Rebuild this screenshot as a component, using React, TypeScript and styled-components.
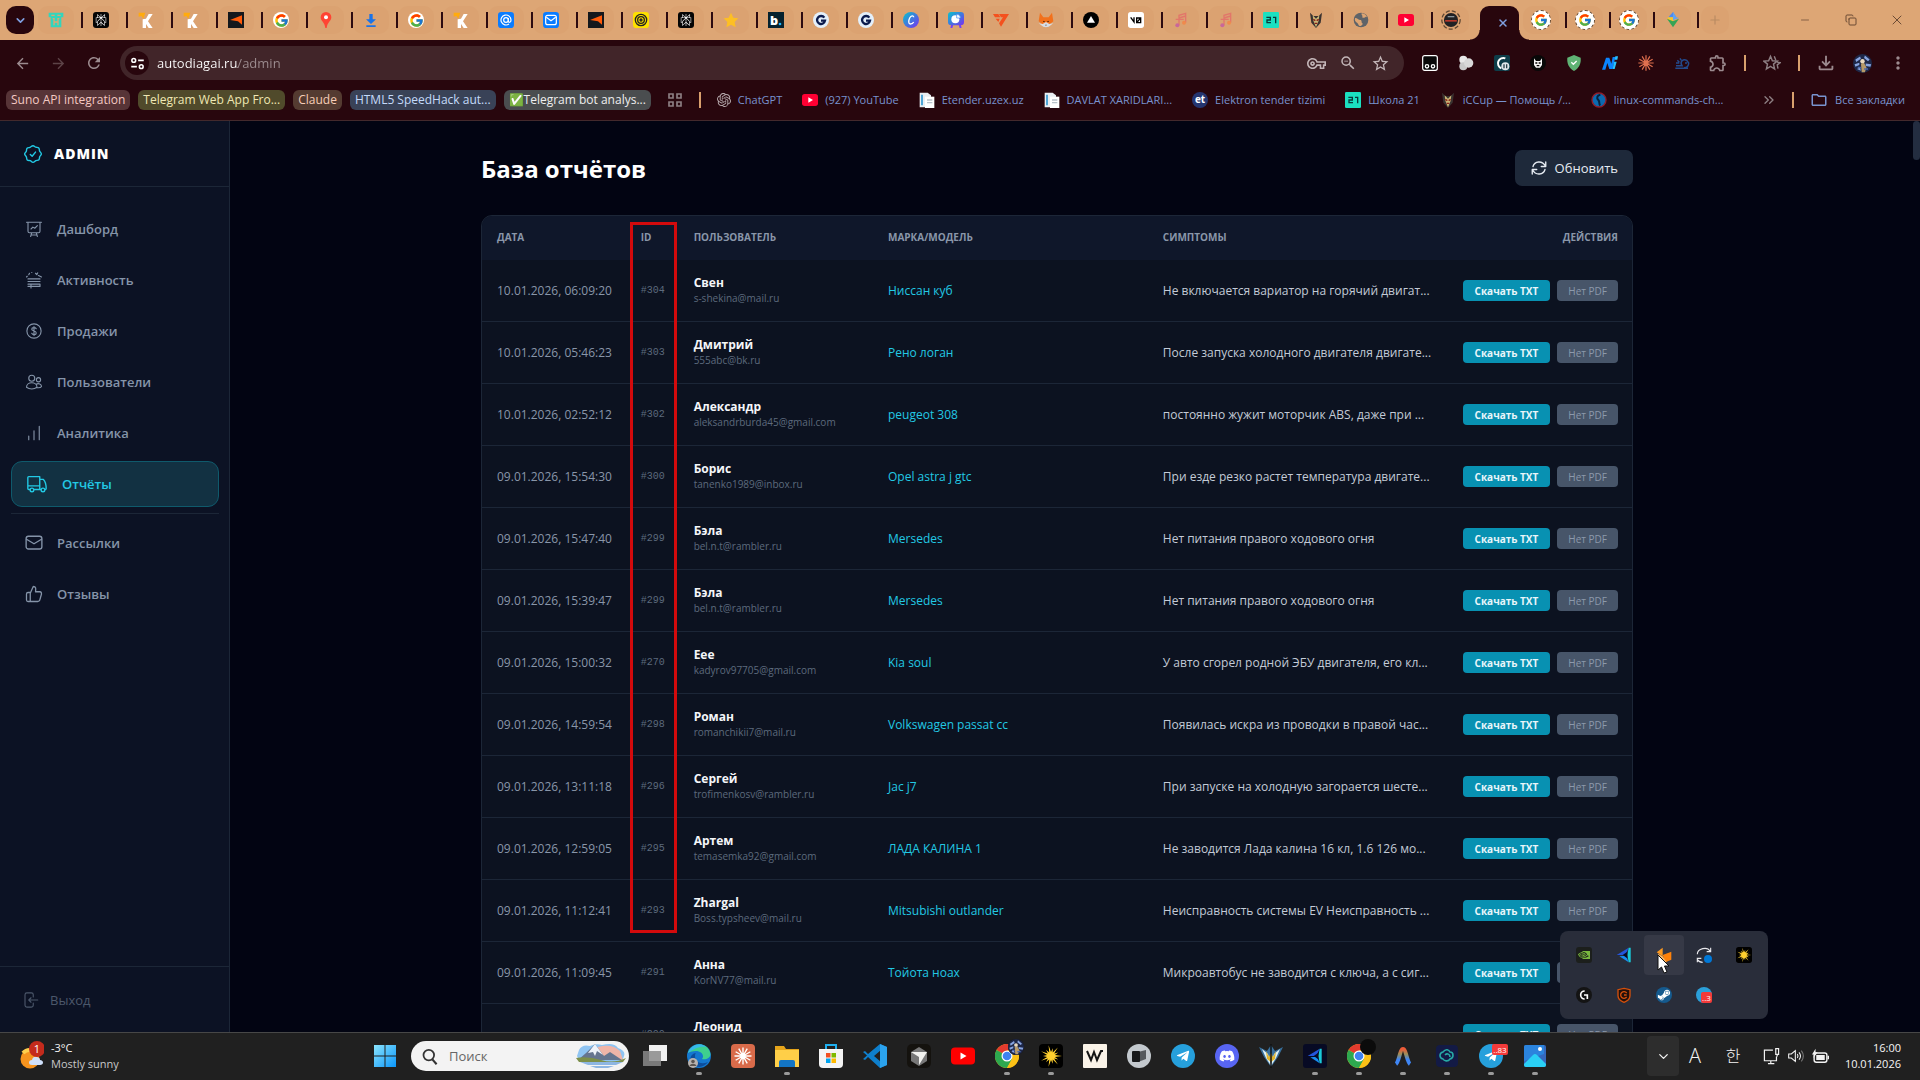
import React from 'react';
import styled, { createGlobalStyle, css } from 'styled-components';
import { FcGoogle } from 'react-icons/fc';
import { FaTelegramPlane, FaDiscord, FaSteamSymbol } from 'react-icons/fa';
import { SiOpenai, SiNvidia, SiPerplexity } from 'react-icons/si';
import {
  MdArrowBack, MdArrowForward, MdRefresh, MdOutlineVpnKey, MdZoomOut, MdStarBorder,
  MdOutlineExtension, MdOutlineFileDownload, MdMoreVert, MdOutlineFolder,
} from 'react-icons/md';
import { ChevronDown, ChevronsRight, X, Plus, Minus, Copy } from 'lucide-react';

const ui = '"Open Sans", "Noto Sans", sans-serif';

const Global = createGlobalStyle`
  * { box-sizing: border-box; }
  body { margin: 0; background: #020412; font-family: ${ui}; overflow: hidden; }
  button, input { font-family: inherit; margin: 0; padding: 0; border: 0; background: none; color: inherit; }
  a { color: inherit; text-decoration: none; }
  svg { display: block; flex: none; }
`;

/* ---------- drawings ---------- */

const rays = (n: number, cx: number, cy: number, r1: number, r2: number) =>
  Array.from({ length: n }, (_, i) => {
    const a = (i / n) * Math.PI * 2;
    return `M${cx + r1 * Math.cos(a)} ${cy + r1 * Math.sin(a)}L${cx + r2 * Math.cos(a)} ${cy + r2 * Math.sin(a)}`;
  }).join('');

const spikes = (n: number, r1: number, r2: number) =>
  'M' + Array.from({ length: n * 2 }, (_, i) => {
    const a = (i / n) * Math.PI;
    const r = i % 2 ? r1 : r2 - (i % 4 ? 3 : 0);
    return `${12 + r * Math.cos(a)} ${12 + r * Math.sin(a)}`;
  }).join('L') + 'Z';

const Svg = ({ size = 16, children }: { size?: number; children: React.ReactNode }) => (
  <svg width={size} height={size} viewBox="0 0 24 24" aria-hidden="true">{children}</svg>
);

type Draw = (p: { size?: number }) => React.ReactElement;

const TH: Draw = p => <Svg {...p}><path d="M1 1h22v7h-3v15H4V8H1z" fill="#32d5bd" /><path d="M5 4h5v2H5zm9 0h5v2h-5zM7 9h3v5h4V9h3v2h-1v9h-2v-4h-4v4H8v-9H7z" fill="#dda573" /></Svg>;
const Perplexity: Draw = ({ size = 16 }) => <Tile $s={size} $bg="#050505" $fg="#fff"><SiPerplexity size={size - 4} /></Tile>;
const Kwork: Draw = p => <Svg {...p}><path d="M1 1h10L8 10 5 6 1 7z" fill="#ffab0f" /><path d="M7 11V24h5v-6l4 6h6l-7-10 7-11h-6l-4 7z" fill="#fff" /></Svg>;
const Arrow: Draw = p => <Svg {...p}><path d="M0 0h24v24H0z" fill="#15181c" /><path d="M3 12 21 5v14l-6-5z" fill="#ff5b0a" /></Svg>;
const Pin: Draw = p => <Svg {...p}><path d="M12 0a8 8 0 0 0-8 8c0 6 6 7 7 16h2c1-9 7-10 7-16a8 8 0 0 0-8-8z" fill="#ff4433" /><circle cx="12" cy="8" r="3" fill="#fff" /></Svg>;
const Down: Draw = p => <Svg {...p}><path d="M9.500 3h5v8h5L12 18 4.500 11h5zM5 20h14v2.500H5z" fill="#1a73e8" /></Svg>;
const At: Draw = p => <Svg {...p}><rect width="24" height="24" rx="5" fill="#0a7cff" /><g fill="none" stroke="#fff" strokeWidth="1.800"><circle cx="12" cy="12" r="3.500" /><path d="M15.500 9v4.500c0 3 4 2.500 4-1.500a7.500 7.500 0 1 0-3 6" /></g></Svg>;
const MailBlue: Draw = p => <Svg {...p}><rect width="24" height="24" rx="5" fill="#0a7cff" /><rect x="4" y="5" width="16" height="14" rx="3" fill="none" stroke="#fff" strokeWidth="1.800" /><path d="m5 8 7 5 7-5" fill="none" stroke="#fff" strokeWidth="1.800" /></Svg>;
const Finger: Draw = p => <Svg {...p}><rect width="24" height="24" rx="5" fill="#ffe100" /><g fill="none" stroke="#222" strokeWidth="2"><circle cx="12" cy="12" r="8.500" /><circle cx="12" cy="12" r="5" /><circle cx="12" cy="12" r="1.500" /></g></Svg>;
const StarY: Draw = p => <Svg {...p}><path d="m12 1 3.500 7.500 7.500 1-5.500 5.500 1.500 8-7-4-7 4 1.500-8L1 9.500l7.500-1z" fill="#fdbf24" /></Svg>;
const Bdot: Draw = p => <Svg {...p}><path d="M0 0h24v24H0z" fill="#06222e" /><text x="3" y="19" fontSize="19" fontWeight="800" fontFamily="Open Sans" fill="#fff">b</text><circle cx="18" cy="18" r="2" fill="#1fb6ff" /></Svg>;
const GDark: Draw = p => <Svg {...p}><circle cx="12" cy="12" r="12" fill="#e3effa" /><path d="M17 8.500A6 6 0 1 0 18 13h-6" fill="none" stroke="#0b1b4d" strokeWidth="3.500" /></Svg>;
const Canva: Draw = p => <Svg {...p}><defs><linearGradient id="cv" x1="0" y1="0" x2="1" y2="1"><stop stopColor="#06c4cc" /><stop offset="1" stopColor="#7a2ff0" /></linearGradient></defs><circle cx="12" cy="12" r="12" fill="url(#cv)" /><path d="M16 8c0-3-4-3-6 1s-2 9 1 9 4-1 5-3" fill="none" stroke="#fff" strokeWidth="2" /></Svg>;
const Pie: Draw = p => <Svg {...p}><path d="m7 17-2 7m12-7 2 7" stroke="#7a3cf5" strokeWidth="3" /><rect y="0" width="24" height="20" rx="5" fill="url(#cv)" /><circle cx="11" cy="11" r="6" fill="#fff" /><path d="M13 9V3a7 7 0 0 1 6 6z" fill="#fff" stroke="#3c85ef" /></Svg>;
const Seven: Draw = p => <Svg {...p}><path d="M9 3h15L12 22l-3-5 6-9h-3z" fill="#f4511e" /><path d="M0 3h8l3 5H3zm4 7h6l-2 5z" fill="#f4511e" /></Svg>;
const Fox: Draw = p => <Svg {...p}><path d="m3 1 5 7h8l5-7 2 13-11 9L1 14z" fill="#f2711c" /><path d="m1 17 7 5 4 1 4-1 7-5-6 1-5-3-5 3z" fill="#d8dde4" /><path d="m8 13 3 2H8zm8 0-3 2h3zm-5 6h2l-1 2z" fill="#2a1408" /></Svg>;
const Vercel: Draw = p => <Svg {...p}><circle cx="12" cy="12" r="12" fill="#000" /><path d="m12 6 6 10H6z" fill="#fff" /></Svg>;
const Vzero: Draw = p => <Svg {...p}><rect width="24" height="24" rx="4" fill="#fff" /><path d="m4 8 5 7V8m4 1h6v7h-6zm0 7 6-7" fill="none" stroke="#000" strokeWidth="2" /></Svg>;
const Music: Draw = p => <Svg {...p}><path d="M9 20V5l10-3v14M9 9l10-3M4 11h12" fill="none" stroke="#e2766a" strokeWidth="2" /><circle cx="6.500" cy="20" r="3" fill="#c9679a" /><circle cx="16.500" cy="16" r="3" fill="#ef8a4c" /></Svg>;
const School: Draw = p => <Svg {...p}><rect width="24" height="24" rx="2" fill="#1be0c0" /><path d="M5 8h6v4H6v4h6M15 8h4v9" fill="none" stroke="#08383a" strokeWidth="2" /></Svg>;
const Mask: Draw = p => <Svg {...p}><path d="m3 1 5 5h8l5-5-2 15-7 8-7-8z" fill="#3a3230" /><path d="m7 5 5 5 5-5-1 8-4 10-4-10z" fill="#c9b777" /><path d="m8 11 3 2m5-2-3 2m-3 4h4" stroke="#8a2018" strokeWidth="2" /></Svg>;
const Globe: Draw = p => <Svg {...p}><circle cx="12" cy="12" r="11" fill="#5f6368" /><path d="M3 9c4 0 5 3 8 3s1 4 3 5-2 5-4 4-2-4-4-5-4-3-3-7zM13 2c-1 3 2 3 1 5s4 2 5 0l2 1c-1-4-5-6-8-6z" fill="#dda573" /></Svg>;
const YouTube: Draw = p => <Svg {...p}><rect y="3" width="24" height="18" rx="4" fill="#ff0033" /><path d="m9.500 8 7 4-7 4z" fill="#fff" /></Svg>;
const Ring: Draw = () => <Svg size={20}><circle cx="12" cy="12" r="11" fill="none" stroke="#5d4632" strokeWidth="1.500" strokeDasharray="5 2.500" /><circle cx="12" cy="12" r="8.500" fill="#202124" /><path d="M5 13h14" stroke="#b8372a" strokeWidth="2" /><path d="M8 8h8" stroke="#8f9aa0" strokeWidth="1.500" /></Svg>;
const RingG: Draw = () => <RingWrap><FcGoogle size={14} /></RingWrap>;
const Google: Draw = () => <Disc><FcGoogle size={15} /></Disc>;
const Gem: Draw = p => <Svg {...p}><path d="m12 0 5 8H5z" fill="#4e8cf0" /><path d="m17 8-5-8v12l9-3z" fill="#5fa3f5" /><path d="M5 8 3 11l9 5V8z" fill="#f5c52c" /><path d="M3 10 12 23l9-13-9 4z" fill="#35a455" /></Svg>;

const Robot: Draw = p => <Svg {...p}><rect x="1" y="1" width="22" height="22" rx="3" fill="#080808" stroke="#fff" strokeWidth="1.800" /><g fill="none" stroke="#fff" strokeWidth="2"><circle cx="7.500" cy="17" r="2.500" /><circle cx="16.500" cy="17" r="2.500" /></g></Svg>;
const Blobs: Draw = p => <Svg {...p}><circle cx="8" cy="7" r="6" fill="#e8e8e8" /><circle cx="8" cy="17" r="6" fill="#c9c9c9" /><circle cx="16" cy="12" r="7" fill="#d8d8d8" /></Svg>;
const Gpause: Draw = p => <Svg {...p}><rect width="24" height="24" rx="3" fill="#0d3d49" /><path d="M17 5A8 8 0 1 0 11 20" fill="none" stroke="#fff" strokeWidth="3" /><circle cx="17" cy="17" r="6" fill="#dfe7ea" /><path d="M15 14v6m4-6v6" stroke="#29424a" strokeWidth="2" /></Svg>;
const Wolf: Draw = p => <Svg {...p}><circle cx="12" cy="12" r="12" fill="#080808" /><path d="m6 5 3 4h6l3-4v10l-3 4H9l-3-4z" fill="#f5f5f5" /><path d="M8 12h3m2 0h3m-6 4h4" stroke="#000" strokeWidth="2" /></Svg>;
const Shield: Draw = p => <Svg {...p}><path d="m12 0 10 4c1 9-3 16-10 20C5 20 1 13 2 4z" fill="#5fb374" /><path d="m8 11 3 3 5-5" fill="none" stroke="#fff" strokeWidth="2" /></Svg>;
const Ni: Draw = p => <Svg {...p}><path d="m0 22 6-18h5l3 9 2-10h4l-4 18h-5l-3-9-3 10z" fill="#0a84ff" /><path d="m18 10h4l-3 11h-3zm2-8h4l-1 5h-4z" fill="#27c2ff" /></Svg>;
const Burst: Draw = p => <Svg {...p}><path d={rays(12, 12, 12, 0, 11.500)} stroke="#e0704f" strokeWidth="1.800" /></Svg>;
const Whale: Draw = p => <Svg {...p}><path d="M2 20h19M3 16h9c-4-6 2-11 7-8l3 4c0 5-3 7-7 7M5 8l3 3M3 12h5M9 5l2 3" fill="none" stroke="#234a8d" strokeWidth="2.200" /><circle cx="18" cy="12" r="1.500" fill="#234a8d" /></Svg>;
const StarList: Draw = p => <Svg {...p}><path d="m10 3 2.500 6 6.500.5-5 4 1.500 6.500-5.500-3.500L4.500 20 6 13.500l-5-4 6.500-.5zM15 3l2 5m2 3 4 .5-4 3 1 5" fill="none" stroke="#8d7f83" strokeWidth="1.900" /></Svg>;
const Avatar: Draw = p => <Svg {...p}><circle cx="12" cy="12" r="12" fill="#1e2747" /><path d="M3 7l6-4 1 3-6 4zm12-5 6 5-2 2-5-4zM2 13l6-2v3l-5 2zm14-1 7 1-1 3-6-1zM5 19l4-2 1 4z" fill="#87a4e0" /><path d="m10 12 4-1 3 6-2 6h-4z" fill="#b79a68" /><circle cx="12" cy="9" r="2.800" fill="#e8d8bd" /><path d="M6 17h4M14 19h5" stroke="#4d68ad" strokeWidth="2" /></Svg>;
const Tune: Draw = p => <Svg {...p}><g fill="none" stroke="#fff" strokeWidth="2.500"><circle cx="6" cy="7" r="3" /><path d="M13 7h9M2 17h9" /><circle cx="18" cy="17" r="3" /></g></Svg>;
const AppsGrid: Draw = p => <Svg {...p}><path d="M3 3h6v6H3zm12 0h6v6h-6zM3 15h6v6H3zm12 0h6v6h-6z" fill="none" stroke="#8d7f83" strokeWidth="2.500" /></Svg>;
const Pages: Draw = p => <Svg {...p}><path d="M1 1h12l5 4v18H1z" fill="#e9eef2" /><path d="M9 7h14v17H9z" fill="#fff" /><path d="M3 4h3v16H3z" fill="#4ea5d6" /><path d="M12 12h8m-8 4h8" stroke="#b8c2ca" strokeWidth="2" /></Svg>;
const Et: Draw = p => <Svg {...p}><circle cx="12" cy="12" r="12" fill="#25356f" /><text x="12" y="17" textAnchor="middle" fontSize="15" fontWeight="700" fontFamily="Open Sans" fill="#fff">et</text></Svg>;
const Linux: Draw = p => <Svg {...p}><circle cx="12" cy="12" r="10.500" fill="#0b6ab0" stroke="#8e1e2b" strokeWidth="2" /><path d="M14 4c-5 1-6 5-3 8s0 6 3 8" fill="none" stroke="#03223e" strokeWidth="3" /></Svg>;

/* taskbar */
const WinLogo: Draw = () => <Svg size={24}><defs><linearGradient id="wn" x1="0" y1="0" x2="1" y2="1"><stop stopColor="#8be4fd" /><stop offset="1" stopColor="#0a96fb" /></linearGradient></defs><path d="M1 1h10.500v10.500H1zm11.500 0H23v10.500H12.500zM1 12.500h10.500V23H1zm11.500 0H23V23H12.500z" fill="url(#wn)" /></Svg>;
const TaskView: Draw = p => <Svg {...p}><path d="M6 1h18v16H6z" fill="#f1f1f1" /><path d="M0 7h18v15H0z" fill="#8b8b8b" opacity=".85" /></Svg>;
const Edge: Draw = p => <Svg {...p}><circle cx="12" cy="12" r="12" fill="#1478cf" /><path d="M1 9C4-1 19-3 23 8c2 6-4 8-8 7 3-4-1-8-6-8-4 0-7 1-8 2z" fill="#3ecf8e" /><path d="M1 9C4 0 14-2 19 3 12 2 7 5 1 9z" fill="#35b8e8" /><path d="M8 12c0 6 6 9 13 6-4 6-13 7-17 0-2-4 1-9 5-9-1 1-1 2-1 3z" fill="#0c4d9c" /><circle cx="6" cy="19" r="5" fill="#b8b3af" /><circle cx="6" cy="17.500" r="1.800" fill="#5c5652" /><path d="M2.500 22c1-3 6-3 7 0z" fill="#5c5652" /></Svg>;
const Claude: Draw = p => <Svg {...p}><rect width="24" height="24" rx="4" fill="#d96b4a" /><path d={rays(12, 12, 12, 0, 8.500)} stroke="#fff" strokeWidth="1.400" /></Svg>;
const Explorer: Draw = p => <Svg {...p}><path d="M0 2h9l2 3h13v5H0z" fill="#e6a51b" /><path d="M0 6h24v17H0z" fill="#ffcf48" /><path d="M4 23v-5q0-2 2-2h12q2 0 2 2v5z" fill="#1375c4" /></Svg>;
const Store: Draw = p => <Svg {...p}><path d="M7 6V1h10v5" fill="none" stroke="#1fb0f0" strokeWidth="2" /><path d="M0 5h24v15q0 4-4 4H4q-4 0-4-4z" fill="#f4f4f4" /><path d="M7 9h4.500v4.500H7z" fill="#f25022" /><path d="M12.500 9H17v4.500h-4.500z" fill="#7fba00" /><path d="M7 14.500h4.500V19H7z" fill="#00a4ef" /><path d="M12.500 14.500H17V19h-4.500z" fill="#ffb900" /></Svg>;
const VsCode: Draw = p => <Svg {...p}><path d="m17 0 7 3v18l-7 3L5 13l-3 3-2-1 4-3.500L0 8l2-1 3 3zm1 6-7 6 7 6z" fill="#0e7fcc" fillRule="evenodd" /><path d="m17 0 7 3v18l-7 3z" fill="#2ba3ee" /></Svg>;
const CursorApp: Draw = p => <Svg {...p}><rect width="24" height="24" rx="5" fill="#14120e" /><path d="m12 3 8 5v9l-8 5-8-5V8z" fill="#777" /><path d="M4 8h16l-8 13v-8z" fill="#f1f1ee" /></Svg>;
const YtApp: Draw = p => <Svg {...p}><rect y="3.500" width="24" height="17" rx="4" fill="#f00" /><path d="m9.500 8.500 6 3.500-6 3.500z" fill="#fff" /></Svg>;
const Chrome: Draw = p => <Svg {...p}><circle cx="12" cy="12" r="12" fill="#fbc116" /><path d="M12 12 1.600 6A12 12 0 0 1 22.400 6z" fill="#e33b2e" /><path d="M1.600 6A12 12 0 0 0 12 24l5-9-5-3z" fill="#2da94f" /><path d="M22.400 6H12l5 9-5 9A12 12 0 0 0 22.400 6z" fill="#fbc116" /><circle cx="12" cy="12" r="5.500" fill="#fff" /><circle cx="12" cy="12" r="4.300" fill="#3f83f1" /></Svg>;
const Sun: Draw = p => <Svg {...p}><rect width="24" height="24" rx="4" fill="#000" /><path d={spikes(14, 4, 11)} fill="#ffd02e" /></Svg>;
const Wapp: Draw = p => <Svg {...p}><rect width="24" height="24" rx="1" fill="#faf3e8" /><path d="m4 7 4 9 3-8 3 8 4-9h2" fill="none" stroke="#141414" strokeWidth="2" /></Svg>;
const Phones: Draw = p => <Svg {...p}><circle cx="12" cy="12" r="12" fill="#c3c9ce" /><path d="m11 8 8-2v9l-8 3z" fill="#55595d" /><path d="M5 8q0-1 1-1h6q1 0 1 1v9q0 1-1 1H6q-1 0-1-1z" fill="#17191b" /></Svg>;
const Telegram: Draw = ({ size = 24 }) => <Tile $s={size} $bg="#26a0dc" $fg="#fff" $round><FaTelegramPlane size={Math.round(size * 0.6)} /></Tile>;
const Discord: Draw = ({ size = 24 }) => <Tile $s={size} $bg="#5865f2" $fg="#fff" $round><FaDiscord size={16} /></Tile>;
const Bird: Draw = p => <Svg {...p}><path d="m0 3 8 4 4-6 4 6 8-4-5 10-7 10L5 13z" fill="#376f9c" /><path d="m3 5 6 5 3 10 3-10 6-5-4 9-5 8-5-8z" fill="#dff1f6" /><path d="m7 7 3 6 2-4 2 4 3-6-1 8-4 3-4-3z" fill="#e0b52d" /><path d="M12 0v24" stroke="#111" strokeWidth="1.500" /></Svg>;
const Prism: Draw = p => <Svg {...p}><path d="M1 12 19 1l-5 11z" fill="#2455dd" /><path d="M19 1h3v22h-3l-2-11z" fill="#19c9d8" /><path d="m5 14 14 9-4-10z" fill="#178cf0" /><path d="m10 12 7-5v10z" fill="#070a24" /></Svg>;
const PrismApp: Draw = ({ size = 24 }) => <Tile $s={size} $bg="#070a24" $fg="#fff"><Prism size={16} /></Tile>;
const Arch: Draw = p => <Svg {...p}><defs><linearGradient id="ar" x1="0" y1="0" x2="0" y2="1"><stop stopColor="#ef5b38" /><stop offset=".35" stopColor="#9a8f5a" /><stop offset=".7" stopColor="#3f86f5" /></linearGradient></defs><path d="M5 20C8 18 9 5 12 5s4 13 7 15" fill="none" stroke="url(#ar)" strokeWidth="4" /></Svg>;
const Brain: Draw = p => <Svg {...p}><rect x="1" y="1" width="22" height="22" rx="4" fill="#131a45" /><path d="M8 8c3-4 6-2 7 0 4 0 4 6 0 7-2 3-6 2-7 0-4-1-4-6 0-7zm2 3c2-2 5-1 5 2" fill="none" stroke="#27a9a5" strokeWidth="1.600" /></Svg>;
const Photos: Draw = p => <Svg {...p}><rect x="1" y="1" width="22" height="22" rx="2" fill="#3568bd" /><path d="M1 3q0-2 2-2h18v9L1 17z" fill="#2b84dd" /><path d="m1 20 9-9q2-2 4 0l9 9v1q0 2-2 2H3q-2 0-2-2z" fill="#2ad0f5" /><circle cx="17" cy="5" r="2" fill="#fff" /></Svg>;

/* tray */
const Nvidia: Draw = () => <Tile $s={16} $bg="#1c1f1c" $fg="#79b83f"><SiNvidia size={12} /></Tile>;
const Ribbon: Draw = p => <Svg {...p}><path d="m1 8 9-7v13z" fill="#ff9a1f" /><path d="M10 12 23 7v12l-9 4z" fill="#ff820a" /><path d="m3 10 7 4 6 9-12-2z" fill="#ffb760" /></Svg>;
const Sync: Draw = p => <Svg {...p}><path d="M2 11C2 2 17-1 21 6m1-5v6h-6M2 23v-6h6m-6 2c2 3 5 4 8 4" fill="none" stroke="#e8e8ec" strokeWidth="1.700" /><circle cx="18" cy="18" r="6" fill="#0078d7" /></Svg>;
const Logi: Draw = p => <Svg {...p}><circle cx="12" cy="12" r="12" fill="#141414" /><path d="M13 6a6 6 0 1 0 0 12m-1-6h5v6" fill="none" stroke="#fff" strokeWidth="2.500" /></Svg>;
const ShieldO: Draw = p => <Svg {...p}><path d="m12 2 9 2v9c0 5-4 8-9 10-5-2-9-5-9-10V4z" fill="#21100b" stroke="#d4500c" strokeWidth="2" /><path d="M16 9a5 5 0 1 0 0 6m-4-3h4" fill="none" stroke="#d4500c" strokeWidth="2" /></Svg>;
const Steam: Draw = () => <Tile $s={16} $bg="#155a8e" $fg="#fff" $round><FaSteamSymbol size={14} /></Tile>;
const TgTray: Draw = () => <Tile $s={16} $bg="#2b9fd9" $fg="#fff" $round><TrayBadge>..3</TrayBadge></Tile>;

/* sidebar */
const Line = ({ size = 18, w = 1.5, children }: { size?: number; w?: number; children: React.ReactNode }) => (
  <svg width={size} height={size} viewBox="0 0 24 24" fill="none" stroke="currentColor" strokeWidth={w} strokeLinecap="round" strokeLinejoin="round" aria-hidden="true">{children}</svg>
);
const Badge = () => <Line size={20} w={1.7}><path d="M12 2c1.500 0 2 1.300 3.300 1.800s2.600-.1 3.600.9.500 2.300 1 3.600S22 10.500 22 12s-1.500 2-2 3.300.1 2.600-.9 3.600-2.300.5-3.600 1S13.500 22 12 22s-2-1.500-3.300-2-2.600.1-3.600-.9-.5-2.300-1-3.600S2 13.500 2 12s1.500-2 2-3.300-.1-2.600.9-3.600 2.300-.5 3.600-1S10.500 2 12 2z" /><path d="m8.800 12.500 2.200 2.200 4-5" /></Line>;
const Board = () => <Line><path d="M2 3h20M4 3v12q0 2 2 2h12q2 0 2-2V3M9 17l-1.500 5M15 17l1.500 5M8 20h8M8 12l2.500-2.500 2.500 1.500 3.500-3.500" /></Line>;
const Activity = () => <Line><path d="M2 8l1-1M5 5l1-2M9 2h.1M14 3l2 2M18 6l4 2M16 4l1-1.500M4 10.500h16M4 14h16M4 17.500h16v3H8M4 20.500h4M8 17.500v5" /></Line>;
const Dollar = () => <Line><circle cx="12" cy="12" r="9.500" /><path d="M15 9c-1-2-6-2-6 .5s6 2 6 5-5 3-6 .5M12 6v12" /></Line>;
const Users = () => <Line><circle cx="9" cy="7" r="4" /><circle cx="18" cy="9" r="2.800" /><path d="M2 19c0-8 14-8 14 0-4 3-10 3-14 0zM15 15c3-2 7 0 7 3-1 1.500-3 2-6 1.500" /></Line>;
const Bars = () => <Line><path d="M5 16v5M12 9v12M19 3v18" /></Line>;
const Truck = () => <Line size={22}><path d="M4 18H3q-1 0-1-1V5q0-1 1-1h12v14H9M15 7h4c2 2 3 6 3 10q0 1-1 1M15 18h1M2 14h13" /><circle cx="6.500" cy="18.500" r="2" /><circle cx="18.500" cy="18.500" r="2" /></Line>;
const Mail = () => <Line w={1.8}><rect x="1.500" y="3" width="21" height="17" rx="3" /><path d="m2 7 10 6 10-6" /></Line>;
const Thumb = () => <Line w={1.7}><path d="M7 10v12M7 11l4-9c4 0 3.500 3 3 7h6q2 0 2 3l-2 7q-.5 3-3 3H4q-2 0-2-2v-8q0-2 2-2h3" /></Line>;
const Exit = () => <Line><path d="M15 8V5q0-2.500-2.500-2.500h-6Q4 2.500 4 5v14q0 2.500 2.500 2.500h6Q15 21.500 15 19v-3M21 12H9m3-3-3 3 3 3" /></Line>;
const Refresh = () => <Line w={1.8}><path d="M21 4v6h-6M3 20v-6h6M4 10c2-7 12-9 17 0M20 14c-2 7-12 9-17 0" /></Line>;

/* ---------- shared shapes ---------- */

const Tile = styled.span<{ $s: number; $bg: string; $fg: string; $round?: boolean }>`
  position: relative;
  display: grid;
  place-items: center;
  flex: none;
  width: ${p => p.$s}px;
  height: ${p => p.$s}px;
  border-radius: ${p => (p.$round ? '50%' : '3px')};
  background: ${p => p.$bg};
  color: ${p => p.$fg};
`;
const Disc = styled.span`
  display: grid;
  place-items: center;
  width: 16px;
  height: 16px;
  border-radius: 50%;
  background: #fff;
`;
const RingWrap = styled(Disc)`
  width: 20px;
  height: 20px;
  border: 1px dashed #5d4632;
`;
const TrayBadge = styled.span`
  position: absolute;
  right: 0;
  bottom: 0;
  width: 11px;
  height: 11px;
  border-radius: 2px;
  background: #f33a3a;
  font-size: 8px;
  line-height: 11px;
  text-align: center;
`;

/* ---------- browser ---------- */

const Screen = styled.div`
  display: flex;
  flex-direction: column;
  height: 100vh;
  overflow: hidden;
`;
const TabStrip = styled.div`
  display: flex;
  align-items: center;
  flex: none;
  height: 40px;
  padding-left: 6px;
  background: #dda675;
`;
const TabSearch = styled.button`
  display: grid;
  place-items: center;
  width: 28px;
  height: 28px;
  margin-right: 4px;
  border-radius: 10px;
  background: #28060d;
  color: #7f9fe0;
`;
const Tab = styled.button<{ $narrow?: boolean; $plain?: boolean }>`
  display: flex;
  align-items: center;
  justify-content: space-between;
  flex: none;
  width: ${p => (p.$narrow ? 44 : 45)}px;
  height: 28px;
  &::after {
    content: '';
    width: 2px;
    height: 16px;
    background: ${p => (p.$plain ? 'transparent' : '#2c0a10')};
  }
`;
const TabFace = styled.span`
  display: grid;
  place-items: center;
  width: 36px;
  height: 28px;
  border-radius: 10px;
  background: #dba271;
`;
const ActiveTab = styled.button`
  position: relative;
  align-self: flex-end;
  display: grid;
  place-items: center;
  width: 39px;
  height: 34px;
  margin: 0 4px 0 2px;
  padding-left: 6px;
  border-radius: 9px 9px 0 0;
  background: #28060d;
  color: #7f9fe0;
  &::before, &::after {
    content: '';
    position: absolute;
    bottom: 0;
    width: 10px;
    height: 10px;
  }
  &::before { right: 100%; background: radial-gradient(circle at 0 0, transparent 9px, #28060d 10px); }
  &::after { left: 100%; background: radial-gradient(circle at 100% 0, transparent 9px, #28060d 10px); }
`;
const NewTab = styled.button`
  display: grid;
  place-items: center;
  width: 28px;
  height: 28px;
  margin-left: 2px;
  border-radius: 10px;
  background: #dba271;
  color: #b98b62;
`;
const WindowControls = styled.div`
  display: flex;
  margin-left: auto;
`;
const WindowButton = styled.button`
  display: grid;
  place-items: center;
  width: 46px;
  height: 40px;
  color: #6b4b35;
`;
const Flip = styled.span`
  transform: scaleX(-1) rotate(90deg);
`;
const Toolbar = styled.div`
  display: flex;
  align-items: center;
  flex: none;
  height: 46px;
  padding: 0 4px;
  background: #28060d;
  color: #9c8b8f;
`;
const ToolButton = styled.button<{ $dim?: boolean }>`
  display: grid;
  place-items: center;
  width: 36px;
  height: 34px;
  color: ${p => (p.$dim ? '#5d4347' : 'inherit')};
`;
const Omnibox = styled.label`
  display: flex;
  align-items: center;
  flex: 1;
  height: 34px;
  margin: 0 8px;
  padding: 0 8px 0 5px;
  border-radius: 17px;
  background: #412529;
  color: #c3b6b8;
`;
const SiteInfo = styled.span`
  display: grid;
  place-items: center;
  width: 24px;
  height: 24px;
  margin-right: 8px;
  border-radius: 50%;
  background: #28060d;
`;
const Address = styled.input`
  flex: 1;
  min-width: 0;
  height: 24px;
  outline: 0;
  font-size: 13px;
  background: linear-gradient(to right, #fff 81px, #9d8d90 81px);
  background-clip: text;
  -webkit-background-clip: text;
  color: transparent;
`;
const OmniButton = styled.button`
  display: grid;
  place-items: center;
  width: 32px;
  height: 32px;
`;
const Rule = styled.span`
  flex: none;
  width: 2px;
  height: 16px;
  margin: 0 8px;
  background: #d9a06d;
`;
const BookmarkBar = styled.nav`
  display: flex;
  align-items: center;
  flex: none;
  height: 35px;
  padding: 0 15px 7px 6px;
  border-bottom: 1px solid #43292c;
  background: #28060d;
  color: #7893cf;
  font-size: 11px;
  line-height: 20px;
  white-space: nowrap;
`;
const Chip = styled.a<{ $bg: string; $fg: string }>`
  margin-right: 8px;
  padding: 0 5px;
  height: 20px;
  border-radius: 6px;
  background: ${p => p.$bg};
  color: ${p => p.$fg};
  font-size: 12px;
  font-weight: 500;
`;
const Bookmark = styled.a`
  display: flex;
  align-items: center;
  gap: 7px;
  margin-right: 20px;
`;
const BookmarkList = styled.div`
  display: flex;
  align-items: center;
  margin-left: 8px;
`;
const BarEnd = styled.div`
  display: flex;
  align-items: center;
  margin-left: auto;
`;
const EndRule = styled(Rule)`
  margin: 0 16px 0 15px;
`;
const FolderLink = styled(Bookmark)`
  margin: 0;
`;

/* ---------- page ---------- */

const Page = styled.div`
  display: flex;
  flex: 1;
  min-height: 0;
  background: #020412;
`;
const Sidebar = styled.aside`
  display: flex;
  flex-direction: column;
  flex: none;
  width: 230px;
  border-right: 1px solid #1c2637;
  background: #0c1224;
`;
const Brand = styled.div`
  display: flex;
  align-items: center;
  gap: 11px;
  height: 66px;
  padding-left: 23px;
  border-bottom: 1px solid #1c2637;
  color: #fff;
  font-size: 14px;
  font-weight: 800;
  letter-spacing: 1px;
  svg { color: #22c9e4; }
`;
const Menu = styled.nav`
  display: flex;
  flex-direction: column;
  gap: 5px;
  flex: 1;
  padding: 19px 10px 0 11px;
`;
const MenuLink = styled.a<{ $active?: boolean }>`
  display: flex;
  align-items: center;
  gap: 14px;
  height: 46px;
  padding: 0 14px;
  border-radius: 11px;
  color: #8594a9;
  font-size: 13px;
  font-weight: 600;
  ${p => p.$active && css`
    border: 1px solid #0f5a6c;
    background: #123142;
    color: #22c9e4;
  `}
`;
const Divider = styled.hr`
  width: 100%;
  height: 1px;
  margin: 1px 0;
  border: 0;
  background: #1c2637;
`;
const Logout = styled.button`
  display: flex;
  align-items: center;
  gap: 10px;
  height: 66px;
  padding-left: 22px;
  border-top: 1px solid #1c2637;
  color: #4c586b;
  font-size: 13px;
`;
const Main = styled.main`
  flex: 1;
  min-width: 0;
  overflow: hidden;
  padding: 29px 29px 0 0;
`;
const Container = styled.div`
  width: 100%;
  max-width: 1152px;
  margin: 0 auto;
`;
const Scrollbar = styled.div`
  flex: none;
  width: 7px;
  &::before {
    content: '';
    display: block;
    height: 39px;
    border-radius: 4px;
    background: #232d40;
  }
`;
const Heading = styled.div`
  display: flex;
  align-items: center;
  justify-content: space-between;
  height: 36px;
  margin-bottom: 29px;
`;
const Title = styled.h1`
  margin: 0;
  color: #fff;
  font-size: 24px;
  font-weight: 700;
`;
const RefreshButton = styled.button`
  display: flex;
  align-items: center;
  gap: 7px;
  height: 36px;
  padding: 0 15px;
  border-radius: 7px;
  background: #1e293a;
  color: #e6ebf2;
  font-size: 13px;
`;
const Card = styled.section`
  position: relative;
  border: 1px solid #1c2637;
  border-radius: 11px;
  background: #0c1220;
`;
const Highlight = styled.div`
  position: absolute;
  top: 6px;
  left: 148px;
  width: 47px;
  height: 711px;
  border: 3px solid #d30a0c;
`;
const Table = styled.table`
  width: 100%;
  table-layout: fixed;
  border-collapse: separate;
  border-spacing: 0;
  text-align: left;
  white-space: nowrap;
`;
const Col = styled.col<{ $w: string }>`
  width: ${p => p.$w};
`;
const Th = styled.th<{ $right?: boolean }>`
  height: 44px;
  padding: 0 14px 3px 15px;
  background: #0f172a;
  color: #8996a9;
  font-size: 10px;
  font-weight: 700;
  text-align: ${p => (p.$right ? 'right' : 'left')};
  &:first-child { border-radius: 10px 0 0 0; }
  &:last-child { border-radius: 0 10px 0 0; }
`;
const Td = styled.td<{ $fg?: string }>`
  height: 62px;
  padding: 0 14px 0 15px;
  border-bottom: 1px solid #1c2637;
  color: ${p => p.$fg || '#8996a9'};
  font-size: 12px;
`;
const IdCell = styled(Td)`
  color: #5d6a7d;
  font-family: "Liberation Mono", monospace;
  font-size: 10px;
`;
const UserName = styled.div`
  color: #f4f6f9;
  font-size: 12px;
  font-weight: 700;
  line-height: 16px;
`;
const Email = styled.div`
  color: #5d6a7d;
  font-size: 10px;
  line-height: 15px;
`;
const Actions = styled.div`
  display: flex;
  justify-content: flex-end;
  gap: 7px;
`;
const TxtButton = styled.button`
  height: 21px;
  padding: 0 12px;
  border-radius: 4px;
  background: #0891b2;
  color: #e9f6fa;
  font-size: 10px;
  font-weight: 700;
`;
const PdfButton = styled(TxtButton)`
  padding: 0 11px;
  background: #475569;
  color: #8c99ab;
  font-weight: 400;
`;

/* ---------- taskbar ---------- */

const Taskbar = styled.footer`
  position: relative;
  display: grid;
  grid-template-columns: 1fr auto 1fr;
  align-items: center;
  flex: none;
  height: 48px;
  padding-bottom: 1px;
  border-top: 1px solid #474747;
  background: #202020;
  color: #f5f5f5;
  font-size: 11px;
  line-height: 16px;
`;
const Weather = styled.button`
  display: flex;
  align-items: center;
  gap: 7px;
  padding-left: 19px;
  text-align: left;
  font-size: 11px;
  line-height: 16px;
`;
const Muted = styled.span`
  color: #c8c8c8;
`;
const AppRow = styled.div`
  display: flex;
  align-items: center;
`;
const AppButton = styled.button<{ $open?: boolean }>`
  position: relative;
  display: grid;
  place-items: center;
  width: 44px;
  height: 46px;
  &::after {
    content: '';
    position: absolute;
    bottom: 4px;
    left: 19px;
    width: 6px;
    height: 3px;
    border-radius: 2px;
    background: ${p => (p.$open ? '#9a9a9a' : 'transparent')};
  }
`;
const AppBadge = styled.span<{ $text?: boolean }>`
  position: absolute;
  top: ${p => (p.$text ? 11 : 6)}px;
  right: 5px;
  display: grid;
  place-items: center;
  width: 16px;
  height: ${p => (p.$text ? 11 : 16)}px;
  border-radius: ${p => (p.$text ? '2px' : '50%')};
  background: ${p => (p.$text ? '#f33a3a' : '#0b0b0b')};
  color: #fff;
  font-size: 8px;
  line-height: 11px;
`;
const SearchBox = styled.label`
  display: flex;
  align-items: center;
  gap: 11px;
  width: 218px;
  height: 30px;
  margin: 0 4px;
  padding: 0 3px 0 10px;
  border-radius: 15px;
  background: #f3f3f3;
`;
const SearchInput = styled.input`
  flex: 1;
  min-width: 0;
  outline: 0;
  font-size: 13px;
  &::placeholder { color: #666; opacity: 1; }
`;
const Tray = styled.div`
  display: flex;
  align-items: center;
  justify-content: flex-end;
  padding-right: 19px;
`;
const TrayToggle = styled.button`
  display: grid;
  place-items: center;
  width: 32px;
  height: 40px;
  border-radius: 4px;
  background: #2d2d2d;
`;
const Lang = styled.button<{ $w: number; $size: number }>`
  width: ${p => p.$w}px;
  font-family: "Open Sans", "Noto Sans CJK KR", sans-serif;
  font-size: ${p => p.$size}px;
  font-weight: 300;
  line-height: 24px;
`;
const Status = styled.div`
  display: flex;
  gap: 8px;
  margin: 0 15px 0 8px;
`;
const Clock = styled.div`
  width: 57px;
  text-align: right;
`;
const Popup = styled.div`
  position: absolute;
  right: 152px;
  bottom: 61px;
  display: grid;
  grid-template-columns: repeat(5, 40px);
  padding: 4px;
  border-radius: 8px;
  background: #292d3a;
`;
const PopupItem = styled.button<{ $hover?: boolean }>`
  position: relative;
  display: grid;
  place-items: center;
  height: 40px;
  border-radius: 4px;
  background: ${p => (p.$hover ? '#363946' : 'transparent')};
`;
const Pointer = styled.span`
  position: absolute;
  left: 13px;
  top: 19px;
`;

/* ---------- data ---------- */

const tabs: [string, Draw][] = [
  ['Tab 1', TH], ['Perplexity', Perplexity], ['Kwork', Kwork], ['Kwork', Kwork], ['Panel', Arrow], ['Google', Google],
  ['Карты', Pin], ['Загрузки', Down], ['Google', Google], ['Kwork', Kwork], ['Mail', At], ['Почта', MailBlue],
  ['Panel', Arrow], ['ID', Finger], ['Perplexity', Perplexity], ['Favorites', StarY], ['b.', Bdot], ['G', GDark], ['G', GDark],
  ['Canva', Canva], ['Slides', Pie], ['Seven', Seven], ['Fox', Fox], ['Vercel', Vercel], ['v0', Vzero], ['Music', Music],
  ['Music', Music], ['Школа 21', School], ['iCCup', Mask], ['Web', Globe], ['YouTube', YouTube], ['Gauge', Ring],
];
const lateTabs: [string, Draw][] = [['Google', RingG], ['Google', RingG], ['Google', RingG], ['Places', Gem]];
const extensions: [string, Draw][] = [
  ['Robot', Robot], ['Blobs', Blobs], ['Pause', Gpause], ['Wolf', Wolf], ['AdGuard', Shield], ['Ni', Ni], ['Claude', Burst], ['Whale', Whale],
];
const chips: [string, string, string][] = [
  ['Suno API integration', '#573437', '#f4c9c3'],
  ['Telegram Web App Fro...', '#504a2b', '#efe7b3'],
  ['Claude', '#543b31', '#f7cdb6'],
  ['HTML5 SpeedHack aut...', '#394257', '#c4dafa'],
  ['✅Telegram bot analys...', '#4a4d4f', '#eeeeee'],
];
const bookmarks: [string, Draw][] = [
  ['(927) YouTube', YouTube], ['Etender.uzex.uz', Pages], ['DAVLAT XARIDLARI...', Pages], ['Elektron tender tizimi', Et],
  ['Школа 21', School], ['iCCup — Помощь /...', Mask], ['linux-commands-ch...', Linux],
];
const menu: [string, () => React.ReactElement][] = [
  ['Дашборд', Board], ['Активность', Activity], ['Продажи', Dollar], ['Пользователи', Users], ['Аналитика', Bars], ['Отчёты', Truck],
];
const reports = [
  ['10.01.2026, 06:09:20', '#304', 'Свен', 's-shekina@mail.ru', 'Ниссан куб', 'Не включается вариатор на горячий двигат...'],
  ['10.01.2026, 05:46:23', '#303', 'Дмитрий', '555abc@bk.ru', 'Рено логан', 'После запуска холодного двигателя двигате...'],
  ['10.01.2026, 02:52:12', '#302', 'Александр', 'aleksandrburda45@gmail.com', 'peugeot 308', 'постоянно жужит моторчик ABS, даже при ...'],
  ['09.01.2026, 15:54:30', '#300', 'Борис', 'tanenko1989@inbox.ru', 'Opel astra j gtc', 'При езде резко растет температура двигате...'],
  ['09.01.2026, 15:47:40', '#299', 'Бэла', 'bel.n.t@rambler.ru', 'Mersedes', 'Нет питания правого ходового огня'],
  ['09.01.2026, 15:39:47', '#299', 'Бэла', 'bel.n.t@rambler.ru', 'Mersedes', 'Нет питания правого ходового огня'],
  ['09.01.2026, 15:00:32', '#270', 'Еее', 'kadyrov97705@gmail.com', 'Kia soul', 'У авто сгорел родной ЭБУ двигателя, его кл...'],
  ['09.01.2026, 14:59:54', '#298', 'Роман', 'romanchikii7@mail.ru', 'Volkswagen passat cc', 'Появилась искра из проводки в правой час...'],
  ['09.01.2026, 13:11:18', '#296', 'Сергей', 'trofimenkosv@rambler.ru', 'Jac j7', 'При запуске на холодную загорается шесте...'],
  ['09.01.2026, 12:59:05', '#295', 'Артем', 'temasemka92@gmail.com', 'ЛАДА КАЛИНА 1', 'Не заводится Лада калина 16 кл, 1.6 126 мо...'],
  ['09.01.2026, 11:12:41', '#293', 'Zhargal', 'Boss.typsheev@mail.ru', 'Mitsubishi outlander', 'Неисправность системы EV Неисправность ...'],
  ['09.01.2026, 11:09:45', '#291', 'Анна', 'KorNV77@mail.ru', 'Тойота ноах', 'Микроавтобус не заводится с ключа, а с сиг...'],
  ['', '#290', 'Леонид', '', '', ''],
];
const apps: [string, Draw, boolean?, string?][] = [
  ['Представление задач', TaskView], ['Edge', Edge, true], ['Claude', Claude], ['Проводник', Explorer, true], ['Store', Store],
  ['VS Code', VsCode], ['Cursor', CursorApp], ['YouTube', YtApp], ['Chrome', Chrome, true, 'avatar'], ['Sun', Sun, true],
  ['Writer', Wapp], ['Phone', Phones], ['Telegram', Telegram], ['Discord', Discord], ['Bird', Bird], ['Prism', PrismApp, true],
  ['Chrome', Chrome, true, 'dark'], ['Arch', Arch, true], ['Brain', Brain, true], ['Telegram', Telegram, true, '..83'], ['Фото', Photos, true],
];
const trayApps: [string, Draw][] = [
  ['NVIDIA', Nvidia], ['Prism', Prism], ['Ribbon', Ribbon], ['Sync', Sync], ['Sun', Sun], ['G HUB', Logi], ['Shield', ShieldO], ['Steam', Steam], ['Telegram', TgTray],
];

/* ---------- view ---------- */

const Browser = () => (
  <>
    <TabStrip>
      <TabSearch aria-label="Поиск вкладок"><ChevronDown size={13} strokeWidth={3} /></TabSearch>
      {tabs.map(([name, Icon], i) => (
        <Tab key={i} aria-label={name} $plain={i === tabs.length - 1}><TabFace><Icon /></TabFace></Tab>
      ))}
      <ActiveTab aria-label="Закрыть вкладку"><X size={12} strokeWidth={3} /></ActiveTab>
      {lateTabs.map(([name, Icon], i) => (
        <Tab key={i} aria-label={name} $narrow><TabFace><Icon /></TabFace></Tab>
      ))}
      <NewTab aria-label="Новая вкладка"><Plus size={14} /></NewTab>
      <WindowControls>
        <WindowButton aria-label="Свернуть"><Minus size={12} strokeWidth={1.5} /></WindowButton>
        <WindowButton aria-label="Развернуть"><Flip><Copy size={12} strokeWidth={2} /></Flip></WindowButton>
        <WindowButton aria-label="Закрыть"><X size={16} strokeWidth={1.5} /></WindowButton>
      </WindowControls>
    </TabStrip>
    <Toolbar>
      <ToolButton aria-label="Назад"><MdArrowBack size={17} /></ToolButton>
      <ToolButton aria-label="Вперёд" $dim><MdArrowForward size={17} /></ToolButton>
      <ToolButton aria-label="Обновить страницу"><MdRefresh size={18} /></ToolButton>
      <Omnibox>
        <SiteInfo><Tune size={15} /></SiteInfo>
        <Address aria-label="Адрес" defaultValue="autodiagai.ru/admin" />
        <OmniButton aria-label="Пароли"><MdOutlineVpnKey size={19} /></OmniButton>
        <OmniButton aria-label="Масштаб"><MdZoomOut size={18} /></OmniButton>
        <OmniButton aria-label="В закладки"><MdStarBorder size={19} /></OmniButton>
      </Omnibox>
      {extensions.map(([name, Icon]) => <ToolButton key={name} aria-label={name}><Icon /></ToolButton>)}
      <ToolButton aria-label="Расширения"><MdOutlineExtension size={20} /></ToolButton>
      <Rule />
      <ToolButton aria-label="Избранное"><StarList size={18} /></ToolButton>
      <Rule />
      <ToolButton aria-label="Загрузки"><MdOutlineFileDownload size={22} /></ToolButton>
      <ToolButton aria-label="Профиль"><Avatar size={19} /></ToolButton>
      <ToolButton aria-label="Меню"><MdMoreVert size={20} /></ToolButton>
    </Toolbar>
    <BookmarkBar>
      {chips.map(([t, bg, fg]) => <Chip key={t} href="#" $bg={bg} $fg={fg}>{t}</Chip>)}
      <OmniButton aria-label="Приложения"><AppsGrid /></OmniButton>
      <Rule />
      <BookmarkList>
        <Bookmark href="#"><SiOpenai size={14} color="#b9adb0" />ChatGPT</Bookmark>
        {bookmarks.map(([t, Icon]) => <Bookmark key={t} href="#"><Icon />{t}</Bookmark>)}
      </BookmarkList>
      <BarEnd>
        <ChevronsRight size={16} color="#8d7f83" />
        <EndRule />
        <FolderLink href="#"><MdOutlineFolder size={18} />Все закладки</FolderLink>
      </BarEnd>
    </BookmarkBar>
  </>
);

const Navigation = () => (
  <Sidebar>
    <Brand><Badge />ADMIN</Brand>
    <Menu>
      {menu.map(([t, Icon]) => <MenuLink key={t} href="#" $active={t === 'Отчёты'}><Icon />{t}</MenuLink>)}
      <Divider />
      <MenuLink href="#"><Mail />Рассылки</MenuLink>
      <MenuLink href="#"><Thumb />Отзывы</MenuLink>
    </Menu>
    <Logout><Exit />Выход</Logout>
  </Sidebar>
);

const Reports = () => (
  <Main>
    <Container>
      <Heading>
        <Title>База отчётов</Title>
        <RefreshButton><Refresh />Обновить</RefreshButton>
      </Heading>
      <Card>
        <Table>
          <colgroup>
            <Col $w="12.5%" /><Col $w="4.6%" /><Col $w="16.9%" /><Col $w="23.9%" /><Col $w="25.6%" /><Col $w="16.5%" />
          </colgroup>
          <thead>
            <tr><Th>ДАТА</Th><Th>ID</Th><Th>ПОЛЬЗОВАТЕЛЬ</Th><Th>МАРКА/МОДЕЛЬ</Th><Th>СИМПТОМЫ</Th><Th $right>ДЕЙСТВИЯ</Th></tr>
          </thead>
          <tbody>
            {reports.map(([date, id, name, mail, car, text], i) => (
              <tr key={i}>
                <Td>{date}</Td>
                <IdCell>{id}</IdCell>
                <Td><UserName>{name}</UserName><Email>{mail || '\u00a0'}</Email></Td>
                <Td $fg="#22c9e4">{car}</Td>
                <Td $fg="#c3cbd7">{text}</Td>
                <Td><Actions><TxtButton>Скачать TXT</TxtButton><PdfButton disabled>Нет PDF</PdfButton></Actions></Td>
              </tr>
            ))}
          </tbody>
        </Table>
        <Highlight />
      </Card>
    </Container>
  </Main>
);

const WeatherIcon = () => (
  <svg width="25" height="30" viewBox="0 0 25 30" aria-hidden="true">
    <circle cx="11" cy="18" r="9.500" fill="#f7941e" />
    <path d="M4 12a9 9 0 0 1 8-3" stroke="#ffcf4d" strokeWidth="4" fill="none" />
    <path d="M13 24q-3 0-3-2.500t3-2.500q1-4 5-3 3 .5 3 3 3 .5 3 2.500T21 24z" fill="#cfe0fa" />
    <circle cx="18" cy="8" r="8" fill="#c42b1c" />
    <text x="18" y="12" textAnchor="middle" fontSize="11" fontFamily="Open Sans" fill="#fff">1</text>
  </svg>
);
const Scene = () => (
  <svg width="50" height="24" viewBox="0 0 50 24" aria-hidden="true">
    <path d="M3 6Q6 0 14 2q6-3 12-1 12-3 16 3 8 3 6 8l-2 6H4L1 12z" fill="#8fc4f2" />
    <path d="M22 3q14-4 22 4l3 9H20z" fill="#f0b5a8" />
    <path d="m2 16 8-7 9-9 9 12 6-4 12 8z" fill="#66758f" />
    <path d="m19 0-7 9 5-1 2 4 2-5 6 4z" fill="#eef3fa" />
    <path d="M0 14q12-2 25 2t25-2l-3 4H3z" fill="#7c8f4a" />
    <path d="M4 18h43l-7 3H12zM14 22h24l-6 2H20z" fill="#8db6e3" />
  </svg>
);

const Shell = () => (
  <Taskbar>
    <Weather><WeatherIcon /><span>-3°C<br /><Muted>Mostly sunny</Muted></span></Weather>
    <AppRow>
      <AppButton aria-label="Пуск"><WinLogo /></AppButton>
      <SearchBox>
        <Svg size={17}><circle cx="11" cy="10" r="7.500" fill="none" stroke="#333" strokeWidth="2.500" /><path d="m16 16 6 7" stroke="#333" strokeWidth="3" /></Svg>
        <SearchInput aria-label="Поиск" placeholder="Поиск" />
        <Scene />
      </SearchBox>
      {apps.map(([name, Icon, open, badge], i) => (
        <AppButton key={i} aria-label={name} $open={open}>
          <Icon size={24} />
          {badge && <AppBadge $text={badge === '..83'}>{badge === '..83' ? badge : badge === 'avatar' ? <Avatar size={16} /> : null}</AppBadge>}
        </AppButton>
      ))}
    </AppRow>
    <Tray>
      <TrayToggle aria-label="Скрытые значки"><ChevronDown size={15} /></TrayToggle>
      <Lang $w={32} $size={20}>A</Lang>
      <Lang $w={44} $size={16}>한</Lang>
      <Status>
        <Svg size={17}><path d="M14 3H2v15h17v-6M7 22h9m-5-4v4M18 1h4v8h-4zm2 8v3" fill="none" stroke="#f2f2f2" strokeWidth="1.700" /></Svg>
        <Svg size={16}><path d="M1 9h4l6-5v16l-6-5H1zm13 0q2 3 0 6m2.500-8.500q4.500 5.500 0 11" fill="none" stroke="#f2f2f2" strokeWidth="1.600" /><path d="M20 4q6 8 0 16" fill="none" stroke="#777" strokeWidth="1.600" /></Svg>
        <Svg size={17}><rect x="3" y="7" width="18" height="13" rx="3" fill="none" stroke="#f2f2f2" strokeWidth="2" /><path d="M6 10h12v7H6zm16 1h2v5h-2zM5 1 0 9h3l-1 5 6-8H5z" fill="#f2f2f2" /></Svg>
      </Status>
      <Clock>16:00<br />10.01.2026</Clock>
    </Tray>
    <Popup>
      {trayApps.map(([name, Icon], i) => (
        <PopupItem key={name} aria-label={name} $hover={i === 2}>
          <Icon size={16} />
          {i === 2 && <Pointer><svg width="13" height="20" viewBox="0 0 13 20"><path d="M1 1v15l3.500-3 2.500 6 3-1-2.500-6H12z" fill="#fff" stroke="#111" /></svg></Pointer>}
        </PopupItem>
      ))}
    </Popup>
  </Taskbar>
);

export default function App() {
  return (
    <Screen>
      <Global />
      <Browser />
      <Page>
        <Navigation />
        <Reports />
        <Scrollbar />
      </Page>
      <Shell />
    </Screen>
  );
}
